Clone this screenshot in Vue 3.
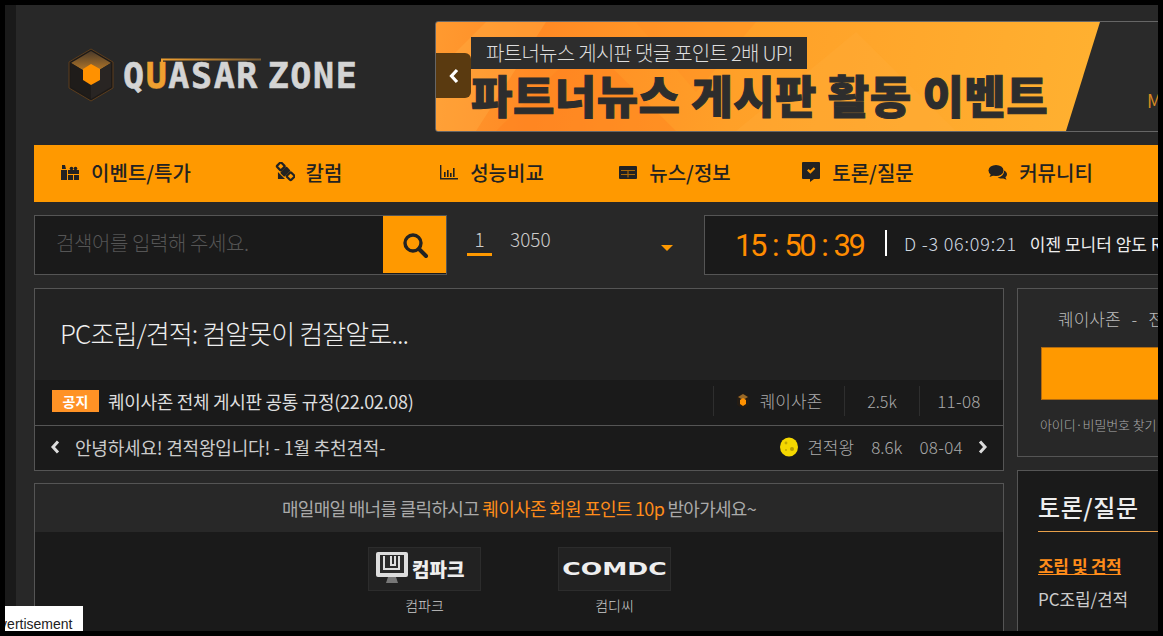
<template>
  <div class="frame">
    <div class="page">
      <div class="strip"></div>
      <div class="main">
        <!-- 상단 로고 + 배너 -->
        <header class="top">
          <div class="logo">
            <svg width="46" height="54" viewBox="0 0 46 54">
              <defs>
                <linearGradient id="cap" x1="0" y1="0" x2="0" y2="1">
                  <stop offset="0" stop-color="#4a3a2a" />
                  <stop offset="1" stop-color="#c98428" />
                </linearGradient>
              </defs>
              <polygon points="23,1 45,14 45,40 23,53 1,40 1,14" fill="#1d1a18" stroke="#5c3d1c" stroke-width="1" />
              <polygon points="23,3 43,15 23,27 3,15" fill="url(#cap)" />
              <polygon points="3,15 23,27 23,51 3,39" fill="#1f1c1a" />
              <polygon points="43,15 23,27 23,51 43,39" fill="#292523" />
              <polygon points="23,16 32,21 32,32 23,37 15,32 15,21" fill="#ff9100" />
            </svg>
            <div class="logo-word">
              <span>Q<em>U</em>ASAR ZONE</span>
              <svg class="logo-line" width="100" height="30" viewBox="0 0 100 30">
                <defs>
                  <linearGradient id="fade" x1="0" y1="0" x2="1" y2="0">
                    <stop offset="0" stop-color="#f0a030" />
                    <stop offset="1" stop-color="#7a5a30" />
                  </linearGradient>
                </defs>
                <path d="M1 26 V1.500 H100" fill="none" stroke="url(#fade)" stroke-width="2" />
              </svg>
            </div>
          </div>
          <div class="banner">
            <svg class="banner-bg" width="680" height="109" viewBox="0 0 680 109">
              <polygon points="0,50 50,0 110,0 40,109 0,109" fill="#ffb347" opacity="0.35" />
              <polygon points="60,109 150,20 240,109" fill="#ff7f1e" opacity="0.35" />
              <polygon points="200,0 320,0 260,70" fill="#ff8a24" opacity="0.3" />
              <polygon points="300,109 420,10 520,109" fill="#ffb040" opacity="0.25" />
            </svg>
            <div class="banner-side"></div>
            <span class="banner-m">M</span>
            <div class="banner-label">파트너뉴스 게시판 댓글 포인트 2배 UP!</div>
            <div class="banner-title">파트너뉴스 게시판 활동 이벤트</div>
            <button class="banner-prev">
              <svg width="12" height="16" viewBox="0 0 12 16"><path d="M9 2 L3.500 8 L9 14" fill="none" stroke="#fff" stroke-width="3.200" /></svg>
            </button>
          </div>
        </header>

        <nav class="nav">
          <a v-for="item in navItems" :key="item.label" class="nav-item">
            <svg width="20" height="20" viewBox="0 0 20 20" fill="#222" v-html="item.icon"></svg>
            <span>{{ item.label }}</span>
          </a>
        </nav>

        <div class="tools">
          <div class="search">
            <div class="search-input">검색어를 입력해 주세요.</div>
            <div class="search-btn">
              <svg width="28" height="28" viewBox="0 0 28 28"><circle cx="12" cy="12" r="8" fill="none" stroke="#222" stroke-width="3.400" /><path d="M18 18 L25 25" stroke="#222" stroke-width="4" stroke-linecap="round" /></svg>
            </div>
          </div>
          <div class="rank">
            <span class="rank-no">1</span>
            <span class="rank-word">3050</span>
            <span class="rank-arrow"></span>
          </div>
          <div class="clock">
            <span class="clock-time">15 : 50 : 39</span>
            <span class="clock-bar"></span>
            <span class="clock-d">D -3 06:09:21</span>
            <span class="clock-msg">이젠 모니터 암도 RGB</span>
          </div>
        </div>

        <div class="columns">
          <div class="left">
            <section class="board">
              <h1 class="board-title">PC조립/견적: 컴알못이 컴잘알로...</h1>
              <div class="row notice">
                <span class="badge">공지</span>
                <span class="row-text">퀘이사존 전체 게시판 공통 규정(22.02.08)</span>
                <div class="cell cell-user">
                  <svg width="14" height="18" viewBox="0 0 14 18">
                    <polygon points="7,1 13,5 13,13 7,17 1,13 1,5" fill="#241c14" />
                    <polygon points="7,2 12,5 7,8 2,5" fill="#9a6a28" />
                    <polygon points="7,6 10,8 10,12 7,14 4,12 4,8" fill="#ff9100" />
                  </svg>
                  <span>퀘이사존</span>
                </div>
                <div class="cell cell-views">2.5k</div>
                <div class="cell cell-date">11-08</div>
              </div>
              <div class="row post">
                <svg class="chev" width="10" height="14" viewBox="0 0 10 14"><path d="M8 1.500 L3 7 L8 12.500" fill="none" stroke="#ddd" stroke-width="3" /></svg>
                <span class="post-text">안녕하세요! 견적왕입니다! - 1월 추천견적-</span>
                <svg class="moon" width="18" height="20" viewBox="0 0 18 20">
                  <ellipse cx="9" cy="10" rx="9" ry="9.600" fill="#f5d800" />
                  <circle cx="6" cy="6" r="1.400" fill="#c4a800" />
                  <circle cx="12" cy="12" r="2" fill="#b89e00" />
                  <circle cx="6" cy="13" r="1" fill="#c4a800" />
                </svg>
                <span class="post-meta name">견적왕</span>
                <span class="post-meta views">8.6k</span>
                <span class="post-meta date">08-04</span>
                <svg class="chev-r" width="10" height="14" viewBox="0 0 10 14"><path d="M2 1.500 L7 7 L2 12.500" fill="none" stroke="#ddd" stroke-width="3" /></svg>
              </div>
            </section>

            <section class="ads">
              <div class="ads-head">매일매일 배너를 클릭하시고 <em>퀘이사존 회원 포인트 10p</em> 받아가세요~</div>
              <div class="ads-body">
                <div class="ad">
                  <div class="ad-box compark">
                    <svg width="34" height="36" viewBox="0 0 34 36">
                      <rect x="1" y="1" width="32" height="25" rx="2" fill="#ddd" />
                      <rect x="5" y="4" width="24" height="18" fill="#2a2a2a" />
                      <path d="M9 5 V18 H24 V5 M16 5 V14 H20 V5" fill="none" stroke="#ddd" stroke-width="2" />
                      <path d="M13 26 H21 L23 32 H11 Z" fill="#777" />
                    </svg>
                    <span class="compark-text">컴파크</span>
                  </div>
                  <span class="ad-name">컴파크</span>
                </div>
                <div class="ad">
                  <div class="ad-box"><span class="comdc-text">COMDC</span></div>
                  <span class="ad-name">컴디씨</span>
                </div>
              </div>
            </section>
          </div>

          <aside class="right">
            <div class="login">
              <div class="login-head">퀘이사존<span class="sep">-</span>전체 로그인</div>
              <div class="login-btn"></div>
              <div class="login-find">아이디·비밀번호 찾기</div>
            </div>
            <div class="side-menu">
              <h2>토론/질문</h2>
              <div class="side-active">조립 및 견적</div>
              <div class="side-link">PC조립/견적</div>
            </div>
          </aside>
        </div>
      </div>
      <div class="advert"><span>Advertisement</span></div>
    </div>
  </div>
</template>

<script setup>
const navItems = [
  {
    label: '이벤트/특가',
    icon: '<path d="M1 8h6v10H1z"/><path d="M2 3h3l1 4H2z"/><path d="M8 8h11v4H8zM8 13h5v5H8zM14 13h5v5h-5z"/><circle cx="11.500" cy="6.500" r="1.800"/><circle cx="15.500" cy="6.500" r="1.800"/>',
  },
  {
    label: '칼럼',
    icon: '<g transform="rotate(45 10 10)"><rect x="7" y="5" width="6" height="9" rx="1"/><rect x="0" y="6" width="6" height="6" rx="1" fill="none" stroke="#222" stroke-width="2.200"/><rect x="14" y="6" width="6" height="6" rx="1" fill="none" stroke="#222" stroke-width="2.200"/><path d="M5 15h10l-5 5z"/></g>',
  },
  {
    label: '성능비교',
    icon: '<path d="M1 3h1.400v13H19v1.400H1z"/><path d="M5 10h1.600v5H5zM8 8h1.600v7H8zM11 11h1.600v4H11zM14 6h1.600v9H14z"/>',
  },
  {
    label: '뉴스/정보',
    icon: '<rect x="1" y="4" width="18" height="13" rx="1"/><path d="M3 8.500h14M3 12.500h14M10 8.500v7" stroke="#a86808" stroke-width="1.200" fill="none"/>',
  },
  {
    label: '토론/질문',
    icon: '<path fill-rule="evenodd" d="M2 0h16a1 1 0 0 1 1 1v15a1 1 0 0 1-1 1h-5l-4 3v-3H2a1 1 0 0 1-1-1V1a1 1 0 0 1 1-1zM6 8.500l1.600-1.600 1.700 1.700 3.400-3.400L14.300 6.800l-5 5z"/>',
  },
  {
    label: '커뮤니티',
    icon: '<ellipse cx="8" cy="8.500" rx="7.500" ry="5.500"/><path d="M3 12l-1.500 3 4-1.500z"/><path d="M16 8.500c2 1 3 2.300 3 3.800 0 1.200-.6 2.200-1.600 3l1.100 2.400-3.200-1.300c-2 .4-4.200 0-5.600-1 3.800-.3 6.500-3.100 6.300-6.900z"/>',
  },
]
</script>

<style>
html, body {
  margin: 0;
  background: #000;
}
</style>

<style scoped>
.frame {
  box-sizing: border-box;
  width: 1163px;
  height: 636px;
  padding: 5px;
  background: #000;
  font-family: "Noto Sans CJK KR", "Liberation Sans", sans-serif;
}

.page {
  position: relative;
  display: flex;
  height: 626px;
  overflow: hidden;
  background: #282828;
}

.strip {
  flex: none;
  width: 11px;
  background: #1a1a1a;
}

.main {
  flex: none;
  width: 1300px;
  padding-left: 18px;
}

.top {
  display: flex;
  align-items: flex-start;
  height: 140px;
}

.logo {
  display: flex;
  align-items: flex-start;
  width: 401px;
  padding-top: 43px;
  padding-left: 34px;
  box-sizing: border-box;
}

.logo-word {
  position: relative;
  margin-left: 9px;
  margin-top: 6px;
  color: #d4d4d4;
  font-family: "DejaVu Sans Mono", monospace;
  font-size: 35px;
  font-weight: 700;
  line-height: 44px;
  letter-spacing: 1.6px;
  word-spacing: -14px;
  white-space: nowrap;
  -webkit-text-stroke: 0.6px #d4d4d4;
}

.logo-word em {
  color: #f0a030;
  font-style: normal;
  -webkit-text-stroke: 0.6px #f0a030;
}

.logo-line {
  position: absolute;
  left: 38px;
  top: 4px;
}

.banner {
  position: relative;
  box-sizing: border-box;
  flex: none;
  width: 760px;
  height: 111px;
  margin-top: 16px;
  padding: 15px 0 0 35px;
  border: 1px solid #666;
  border-radius: 3px;
  overflow: hidden;
  background: linear-gradient(100deg, #ff9a30 0%, #ff8a24 14%, #ffa028 40%, #ffb030 85%);
}

.banner-bg {
  position: absolute;
  left: 0;
  top: 0;
}

.banner-side {
  position: absolute;
  top: 0;
  bottom: 0;
  left: 630px;
  width: 130px;
  background: #2a2a2a;
  clip-path: polygon(34px 0, 100% 0, 100% 100%, 0 100%);
}

.banner-m {
  position: absolute;
  left: 711px;
  top: 65px;
  color: #d88a20;
  font-size: 18px;
}

.banner-label {
  position: relative;
  box-sizing: border-box;
  width: 336px;
  height: 32px;
  padding-left: 15px;
  background: #2d2d2d;
  color: #ddd;
  font-size: 20px;
  font-weight: 300;
  line-height: 31px;
  letter-spacing: -0.7px;
  white-space: nowrap;
}

.banner-title {
  position: relative;
  margin-top: 1px;
  color: #2d2d2d;
  font-size: 45px;
  font-weight: 900;
  line-height: 50px;
  letter-spacing: 0.5px;
  white-space: nowrap;
  -webkit-text-stroke: 1px #2d2d2d;
}

.banner-prev {
  position: absolute;
  left: 0;
  top: 31px;
  width: 35px;
  height: 45px;
  padding: 0;
  border: 0;
  border-radius: 0 6px 6px 0;
  background: #5a3a10;
  display: flex;
  align-items: center;
  justify-content: center;
}

.nav {
  display: grid;
  grid-template-columns: repeat(6, 183px);
  height: 57px;
  background: #ff9900;
}

.nav-item {
  display: flex;
  align-items: center;
  justify-content: center;
  gap: 11px;
  padding-bottom: 3px;
  color: #222;
  font-size: 20px;
  font-weight: 500;
  white-space: nowrap;
}

.tools {
  display: flex;
  align-items: stretch;
  height: 60px;
  margin-top: 13px;
}

.search {
  box-sizing: border-box;
  display: flex;
  flex: none;
  width: 413px;
  border: 1px solid #555;
  background: #1a1a1a;
}

.search-input {
  flex: 1;
  padding-left: 21px;
  color: #555;
  font-size: 20px;
  font-weight: 300;
  line-height: 54px;
  letter-spacing: -0.4px;
}

.search-btn {
  display: flex;
  align-items: center;
  justify-content: center;
  width: 63px;
  height: 57px;
  background: #ff9900;
}

.rank {
  display: flex;
  flex: none;
  align-items: flex-start;
  width: 257px;
  box-sizing: border-box;
  padding-left: 20px;
  color: #ccc;
  font-size: 19px;
  font-weight: 300;
}

.rank-no {
  box-sizing: border-box;
  width: 25px;
  height: 41px;
  border-bottom: 3px solid #ff9900;
  padding-top: 11px;
  line-height: 26px;
  text-align: center;
}

.rank-word {
  margin-left: 18px;
  padding-top: 11px;
  line-height: 26px;
}

.rank-arrow {
  width: 0;
  height: 0;
  margin-left: 110px;
  margin-top: 30px;
  border-left: 6px solid transparent;
  border-right: 6px solid transparent;
  border-top: 6px solid #ff9900;
}

.clock {
  box-sizing: border-box;
  display: flex;
  flex: none;
  align-items: center;
  width: 600px;
  padding-left: 30px;
  padding-bottom: 4px;
  border: 1px solid #555;
  background: #1a1a1a;
  white-space: nowrap;
}

.clock-time {
  width: 134px;
  padding-top: 4px;
  color: #ff8c00;
  font-family: "Roboto", sans-serif;
  font-size: 31px;
  font-weight: 400;
  letter-spacing: -2.5px;
  word-spacing: 2px;
  white-space: pre;
}

.clock-bar {
  width: 2px;
  height: 26px;
  margin-left: 16px;
  background: #fff;
}

.clock-d {
  margin-left: 17px;
  color: #d0d8e0;
  font-size: 18px;
  font-weight: 300;
  letter-spacing: 0.8px;
}

.clock-msg {
  margin-left: 13px;
  color: #eee;
  font-size: 17px;
  font-weight: 400;
}

.columns {
  display: flex;
  gap: 13px;
  margin-top: 13px;
  align-items: flex-start;
}

.left {
  flex: none;
  width: 970px;
}

.board {
  box-sizing: border-box;
  height: 183px;
  border: 1px solid #555;
  background: #222;
}

.board-title {
  height: 91px;
  margin: 0;
  padding-left: 25px;
  color: #eee;
  font-size: 26px;
  font-weight: 300;
  line-height: 87px;
  letter-spacing: -0.9px;
  white-space: nowrap;
}

.row {
  display: flex;
  align-items: center;
  background: #1a1a1a;
}

.notice {
  box-sizing: border-box;
  height: 46px;
  padding-left: 17px;
  padding-bottom: 4px;
  border-bottom: 1px solid #555;
}

.badge {
  width: 47px;
  height: 22px;
  background: #ff9225;
  color: #fff;
  font-size: 14px;
  font-weight: 700;
  line-height: 22px;
  text-align: center;
}

.row-text {
  flex: 1;
  margin-left: 9px;
  color: #ddd;
  font-size: 18px;
  font-weight: 400;
  letter-spacing: -0.3px;
  white-space: nowrap;
}

.cell {
  box-sizing: border-box;
  display: flex;
  align-items: center;
  justify-content: center;
  height: 30px;
  border-left: 1px solid #2e2e2e;
  color: #aaa;
  font-size: 17px;
  font-weight: 300;
}

.cell-user {
  gap: 10px;
  width: 131px;
}

.cell-views {
  width: 75px;
  font-size: 16px;
}

.cell-date {
  width: 84px;
  padding-right: 5px;
  letter-spacing: 0.3px;
}

.post {
  height: 44px;
  padding-left: 15px;
  padding-bottom: 3px;
  box-sizing: border-box;
}

.post-text {
  flex: 1;
  margin-left: 15px;
  color: #ccc;
  font-size: 18px;
  letter-spacing: -0.2px;
  white-space: nowrap;
}

.post-meta {
  color: #aaa;
  font-size: 17px;
  font-weight: 300;
}

.post-meta.name {
  margin-left: 9px;
}

.post-meta.views {
  margin-left: 17px;
}

.post-meta.date {
  margin-left: 17px;
  letter-spacing: 0.3px;
}

.chev-r {
  margin-left: 15px;
  margin-right: 15px;
}

.ads {
  box-sizing: border-box;
  height: 160px;
  margin-top: 12px;
  border: 1px solid #555;
  background: #1a1a1a;
}

.ads-head {
  height: 48px;
  background: #282828;
  color: #aaa;
  font-size: 18px;
  font-weight: 400;
  line-height: 49px;
  letter-spacing: -0.7px;
  text-align: center;
}

.ads-head em {
  color: #ff8c1a;
  font-style: normal;
}

.ads-body {
  display: flex;
  gap: 77px;
  padding: 15px 0 0 333px;
}

.ad {
  display: flex;
  flex-direction: column;
  align-items: center;
  width: 113px;
}

.ad-box {
  box-sizing: border-box;
  display: flex;
  align-items: center;
  justify-content: center;
  width: 113px;
  height: 44px;
  border: 1px solid #2c2c2c;
  background: #222;
}

.compark {
  justify-content: flex-start;
  padding-left: 6px;
  gap: 3px;
}

.compark-text {
  color: #eee;
  font-size: 19px;
  font-weight: 900;
  line-height: 30px;
}

.comdc-text {
  color: #eee;
  font-family: "DejaVu Sans", sans-serif;
  font-size: 21px;
  font-weight: 700;
  transform: scale(1.2, 0.85);
}

.ad-name {
  margin-top: 5px;
  color: #ccc;
  font-size: 14px;
  font-weight: 300;
  line-height: 18px;
}

.right {
  flex: none;
  width: 300px;
}

.login {
  box-sizing: border-box;
  height: 169px;
  padding: 17px 23px 0 23px;
  border: 1px solid #555;
  background: #282828;
}

.login-head {
  padding-left: 17px;
  color: #bbb;
  font-size: 17px;
  font-weight: 300;
  line-height: 26px;
  white-space: nowrap;
}

.sep {
  margin: 0 11px;
}

.login-btn {
  height: 53px;
  margin-top: 15px;
  box-sizing: border-box;
  border: 1px solid #b06a10;
  background: #ff9900;
}

.login-find {
  margin-top: 15px;
  margin-left: -1px;
  color: #aaa;
  font-size: 13px;
  font-weight: 300;
  line-height: 20px;
  letter-spacing: -0.1px;
}

.side-menu {
  box-sizing: border-box;
  height: 200px;
  margin-top: 13px;
  padding: 16px 0 0 20px;
  border: 1px solid #555;
  background: #1a1a1a;
}

.side-menu h2 {
  height: 44px;
  margin: 0;
  border-bottom: 1px solid #e8a04a;
  color: #eee;
  font-size: 24px;
  font-weight: 500;
  line-height: 40px;
  letter-spacing: 0.6px;
}

.side-active {
  margin-top: 22px;
  color: #ff8c1a;
  font-size: 17px;
  font-weight: 700;
  line-height: 24px;
  text-decoration: underline;
  letter-spacing: -0.4px;
}

.side-link {
  margin-top: 9px;
  color: #ccc;
  font-size: 17px;
  font-weight: 400;
  line-height: 24px;
  letter-spacing: -0.1px;
}

.advert {
  position: absolute;
  left: 0;
  bottom: 0;
  width: 78px;
  height: 25px;
  overflow: hidden;
  background: #fff;
  color: #222;
  font-family: "Liberation Sans", sans-serif;
  font-size: 14px;
  line-height: 37px;
  white-space: nowrap;
}

.advert span {
  display: block;
  margin-left: -22px;
}
</style>
